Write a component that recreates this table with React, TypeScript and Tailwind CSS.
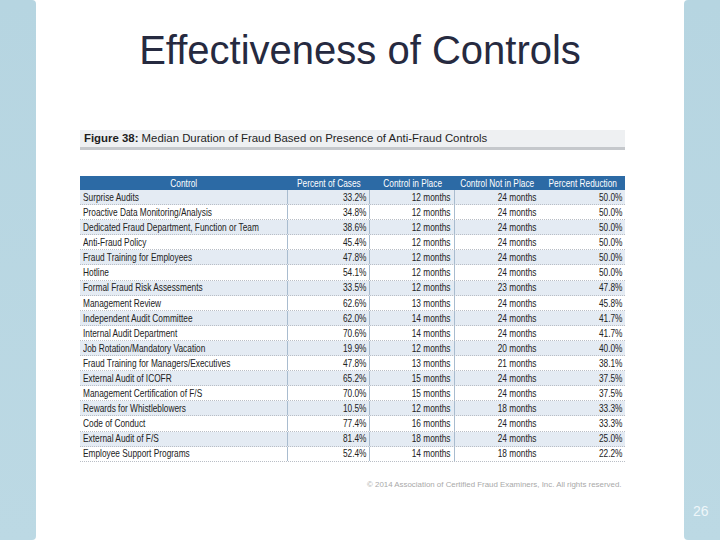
const ROWS: [string, string, string, string, string][] = [
  ["Surprise Audits", "33.2%", "12 months", "24 months", "50.0%"],
  ["Proactive Data Monitoring/Analysis", "34.8%", "12 months", "24 months", "50.0%"],
  ["Dedicated Fraud Department, Function or Team", "38.6%", "12 months", "24 months", "50.0%"],
  ["Anti-Fraud Policy", "45.4%", "12 months", "24 months", "50.0%"],
  ["Fraud Training for Employees", "47.8%", "12 months", "24 months", "50.0%"],
  ["Hotline", "54.1%", "12 months", "24 months", "50.0%"],
  ["Formal Fraud Risk Assessments", "33.5%", "12 months", "23 months", "47.8%"],
  ["Management Review", "62.6%", "13 months", "24 months", "45.8%"],
  ["Independent Audit Committee", "62.0%", "14 months", "24 months", "41.7%"],
  ["Internal Audit Department", "70.6%", "14 months", "24 months", "41.7%"],
  ["Job Rotation/Mandatory Vacation", "19.9%", "12 months", "20 months", "40.0%"],
  ["Fraud Training for Managers/Executives", "47.8%", "13 months", "21 months", "38.1%"],
  ["External Audit of ICOFR", "65.2%", "15 months", "24 months", "37.5%"],
  ["Management Certification of F/S", "70.0%", "15 months", "24 months", "37.5%"],
  ["Rewards for Whistleblowers", "10.5%", "12 months", "18 months", "33.3%"],
  ["Code of Conduct", "77.4%", "16 months", "24 months", "33.3%"],
  ["External Audit of F/S", "81.4%", "18 months", "24 months", "25.0%"],
  ["Employee Support Programs", "52.4%", "14 months", "18 months", "22.2%"],
];

const HEAD = ["Control", "Percent of Cases", "Control in Place", "Control Not in Place", "Percent Reduction"];
const WIDTHS = ["w-[208px]", "w-[82px]", "w-[85px]", "w-[85px]", "w-[85px]"];
const DIVIDER = [true, true, true, false, false];

// no condensed face installed, so squeeze Liberation Sans horizontally
function Narrow({ children, origin }: { children: string; origin: string }) {
  return (
    <span className={`inline-block whitespace-nowrap scale-x-[0.8] ${origin}`}>{children}</span>
  );
}

function Table() {
  return (
    <div className="w-[545px] text-[10.4px] text-[#222]">
      <div className="flex h-[14px] items-center bg-[#2c6aa5] pt-[1px] text-white">
        {HEAD.map((h, i) => (
          <div key={h} className={`${WIDTHS[i]} flex justify-center leading-[14px]`}>
            <Narrow origin="origin-center">{h}</Narrow>
          </div>
        ))}
      </div>
      {ROWS.map((r, ri) => (
        <div
          key={r[0]}
          className={`flex h-[15.1px] border-b border-dotted border-[#b9bec6] ${ri % 2 === 0 ? "bg-[#e4ebf3]" : "bg-white"}`}
        >
          {r.map((c, ci) => (
            <div
              key={ci}
              className={`${WIDTHS[ci]} flex items-center px-[3px] pt-[2px] leading-none ${ci === 0 ? "justify-start" : "justify-end"} ${DIVIDER[ci] ? "border-r border-[#a9bccf]" : ""}`}
            >
              <Narrow origin={ci === 0 ? "origin-left" : "origin-right"}>{c}</Narrow>
            </div>
          ))}
        </div>
      ))}
    </div>
  );
}

export default function App() {
  return (
    <div className="flex h-[540px] w-[720px] overflow-hidden bg-white [font-family:'Liberation_Sans',Arial,sans-serif]">
      <div className="w-[36px] shrink-0 rounded-r-[4px] bg-gradient-to-b from-[#b6d5e1] to-[#bcd9e4]" />
      <div className="flex flex-1 flex-col">
        <h1 className="pt-[28px] text-center text-[40px] leading-[44px] font-normal text-[#262a40]">
          Effectiveness of Controls
        </h1>
        <div className="ml-[44px] mt-[58px] flex h-[20px] w-[545px] items-center border-b-[3px] border-[#c5c8cc] bg-[#eef0f2] pl-[4px] text-[11.4px] text-[#1e1e1e]">
          <span className="font-bold">Figure 38:</span>
          <span>&nbsp;Median Duration of Fraud Based on Presence of Anti-Fraud Controls</span>
        </div>
        <div className="ml-[44px] mt-[26px]">
          <Table />
        </div>
        <div className="ml-[331px] mt-[17px] text-[7.9px] text-[#a9a9a9]">
          © 2014 Association of Certified Fraud Examiners, Inc. All rights reserved.
        </div>
      </div>
      <div className="flex w-[36px] shrink-0 flex-col justify-end rounded-l-[4px] bg-gradient-to-b from-[#b6d5e1] to-[#bcd9e4]">
        <div className="mb-[18px] pl-[9px] text-[14px] font-light text-[#eef6f9]">26</div>
      </div>
    </div>
  );
}
